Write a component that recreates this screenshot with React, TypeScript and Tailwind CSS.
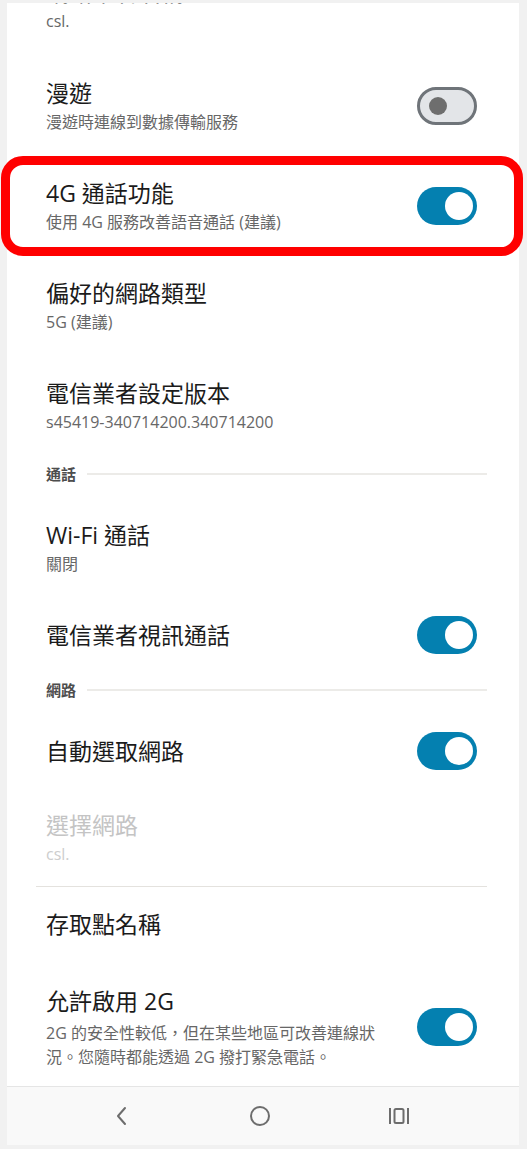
import React from 'react';

const font = { fontFamily: '"Open Sans", "Noto Sans CJK TC", sans-serif' };

function Toggle({ on }: { on: boolean }) {
    if (!on) {
        return (
            <div className="relative -my-[3px] h-[38px] w-[60px] shrink-0 rounded-full border-[3px] border-[#6f7479] bg-[#e3e5e8]">
                <div className="absolute left-[9px] top-[7px] h-[18px] w-[18px] rounded-full bg-[#6e6e6e]" />
            </div>
        );
    }
    return (
        <div className="relative -my-[3px] h-[38px] w-[60px] shrink-0 rounded-full bg-[#0480b0]">
            <div className="absolute right-[4px] top-[5px] h-[28px] w-[28px] rounded-full bg-white" />
        </div>
    );
}

interface RowProps {
    title: string;
    subtitle?: string[];
    toggle?: boolean;
    disabled?: boolean;
    className?: string;
}

function Row({ title, subtitle, toggle, disabled, className = '' }: RowProps) {
    return (
        <div className={`flex items-center pl-[39px] pr-[42px] py-[21px] ${className}`}>
            <div className="flex-1 min-w-0">
                <div
                    className={`text-[23px] leading-[32px] ${disabled ? 'text-[#c4c4c4]' : 'text-[#1b1b1b]'}`}
                >
                    {title}
                </div>
                {subtitle && (
                    <div
                        className={`text-[16px] ${subtitle.length > 1 ? 'mt-[4px] leading-[24px] pr-[40px]' : 'leading-[26px]'} ${disabled ? 'text-[#cdcdcd]' : 'text-[#676767]'}`}
                    >
                        {subtitle.map((s, i) => (
                            <div key={i}>{s}</div>
                        ))}
                    </div>
                )}
            </div>
            {toggle !== undefined && <Toggle on={toggle} />}
        </div>
    );
}

function SectionHeader({ label }: { label: string }) {
    return (
        <div className="flex items-center gap-[11px] pl-[39px] pr-[32px] pt-[8px] pb-[14px]">
            <span className="text-[15px] leading-[20px] font-semibold text-[#4d4d4d]">{label}</span>
            <div className="h-[2px] flex-1 bg-[#ecebe8]" />
        </div>
    );
}

export default function App() {
    return (
        <div className="relative h-[1149px] w-[527px] bg-[#f1f1f1] pt-[3px] pl-[7px] pr-[8px] pb-[4px]" style={font}>
            <div className="flex h-full flex-col bg-white">
                {/* Scroll area */}
                <div className="flex-1 overflow-hidden">
                    <div className="-mt-[47px]">
                        <Row title="網路業者名稱" subtitle={['csl.']} className="!pt-[20px] !pb-[22px]" />
                        <Row title="漫遊" subtitle={['漫遊時連線到數據傳輸服務']} toggle={false} />
                        <Row title="4G 通話功能" subtitle={['使用 4G 服務改善語音通話 (建議)']} toggle={true} />
                        <Row title="偏好的網路類型" subtitle={['5G (建議)']} />
                        <Row title="電信業者設定版本" subtitle={['s45419-340714200.340714200']} />

                        <SectionHeader label="通話" />
                        <Row title="Wi-Fi 通話" subtitle={['關閉']} />
                        <Row title="電信業者視訊通話" toggle={true} />

                        <SectionHeader label="網路" />
                        <Row title="自動選取網路" toggle={true} />
                        <Row title="選擇網路" subtitle={['csl.']} disabled className="!pb-[19px]" />
                        <div className="ml-[29px] mr-[32px] h-[1px] bg-[#e4e2de]" />
                        <Row title="存取點名稱" />
                        <Row
                            title="允許啟用 2G"
                            subtitle={['2G 的安全性較低，但在某些地區可改善連線狀', '況。您隨時都能透過 2G 撥打緊急電話。']}
                            toggle={true}
                            className="!pt-[24px]"
                        />
                    </div>
                </div>

                {/* Navigation bar */}
                <div className="flex h-[59px] items-center justify-around border-t border-[#e5e5e5] bg-[#f9f9f9] px-[50px]">
                    <svg width="20" height="22" viewBox="0 0 20 22" fill="none" className="-ml-[4px]">
                        <path d="M13 3 L6 11 L13 19" stroke="#6d6d6d" strokeWidth="2" strokeLinecap="round" strokeLinejoin="round" />
                    </svg>
                    <svg width="22" height="22" viewBox="0 0 22 22" fill="none">
                        <circle cx="11" cy="11" r="9" stroke="#6d6d6d" strokeWidth="2" />
                    </svg>
                    <svg width="22" height="22" viewBox="0 0 22 22" fill="none">
                        <path d="M2 3 V19" stroke="#6d6d6d" strokeWidth="2" />
                        <rect x="6.5" y="4" width="9" height="14" rx="1.5" stroke="#6d6d6d" strokeWidth="2" />
                        <path d="M20 3 V19" stroke="#6d6d6d" strokeWidth="2" />
                    </svg>
                </div>
            </div>

            {/* Red highlight annotation */}
            <div className="pointer-events-none absolute left-[1px] top-[156px] h-[100px] w-[522px] rounded-[22px] border-[9px] border-[#ff0000]" />
        </div>
    );
}
